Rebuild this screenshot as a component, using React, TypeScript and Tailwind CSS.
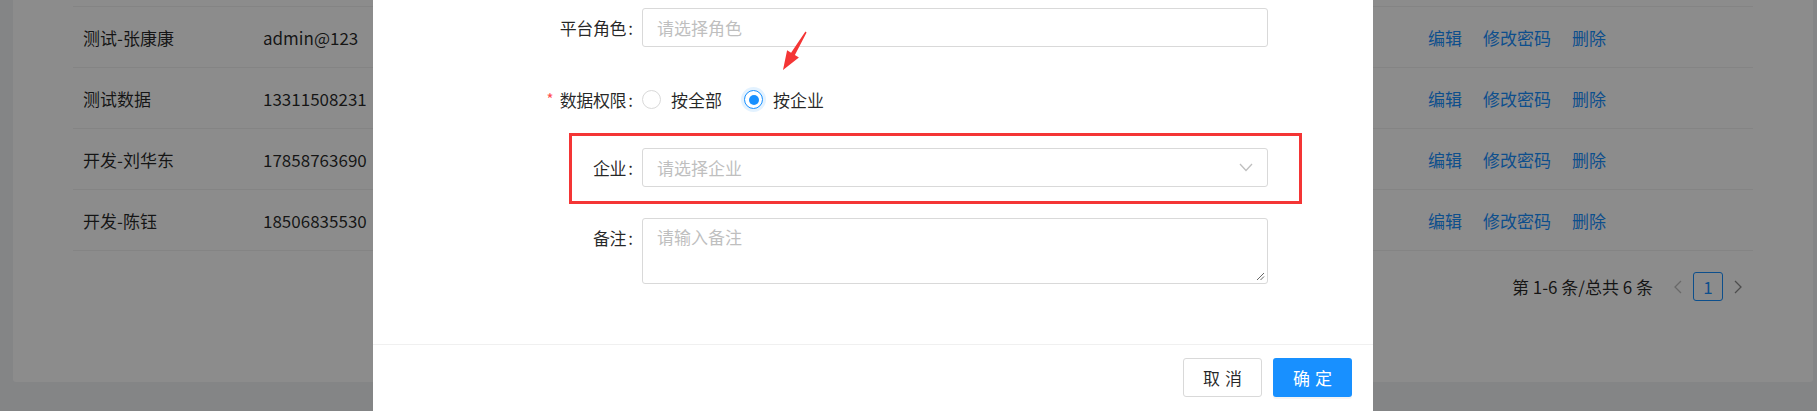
import React from "react";

const FONT = { fontFamily: '"Noto Sans CJK SC", "Noto Sans", sans-serif' };

const rows = [
  { name: "测试-张康康", phone: "admin@123" },
  { name: "测试数据", phone: "13311508231" },
  { name: "开发-刘华东", phone: "17858763690" },
  { name: "开发-陈钰", phone: "18506835530" },
];

function Radio({ checked, label }: { checked?: boolean; label: string }) {
  return (
    <div className="flex items-center">
      <div className="relative w-[19px] h-[19px] flex items-center justify-center">
        {checked ? (
          <div className="w-[19px] h-[19px] rounded-full border border-[#1890ff] bg-white flex items-center justify-center shadow-[0_0_0_3px_rgba(24,144,255,0.12)]">
            <div className="w-[10px] h-[10px] rounded-full bg-[#1890ff]" />
          </div>
        ) : (
          <div className="w-[19px] h-[19px] rounded-full border border-[#d9d9d9] bg-white" />
        )}
      </div>
      <span className="ml-[10px] text-[17px] text-[rgba(0,0,0,0.85)]">{label}</span>
    </div>
  );
}

function Label({ text, required }: { text: string; required?: boolean }) {
  return (
    <div className="w-[269px] shrink-0 pr-[9px] flex items-center justify-end text-[17px] text-[rgba(0,0,0,0.85)] h-[39px]">
      {required && <span className="text-[#ff4d4f] mr-[6px] text-[15px]">*</span>}
      <span className="tracking-[-0.02em]">{text}</span>
      <span className="ml-[2px]">:</span>
    </div>
  );
}

export default function App() {
  return (
    <div className="relative w-[1817px] h-[411px] overflow-hidden bg-[#f0f2f5]" style={FONT}>
      {/* background page */}
      <div className="pl-[13px]">
        <div className="w-[1800px] h-[382px] bg-white rounded-b-[3px] px-[60px]">
          <div className="h-[7px] border-b border-[#f0f0f0]" />
          {rows.map((r) => (
            <div
              key={r.name}
              className="h-[61px] border-b border-[#f0f0f0] flex items-center px-[10px] text-[17px] text-[rgba(0,0,0,0.85)]"
            >
              <div className="w-[180px] pt-[2px]">{r.name}</div>
              <div className="flex-1 pt-[2px]">{r.phone}</div>
              <div className="w-[315px] flex gap-[21px] text-[#1890ff] pt-[2px]">
                <span>编辑</span>
                <span>修改密码</span>
                <span>删除</span>
              </div>
            </div>
          ))}
          <div className="flex justify-end items-center mt-[21px] h-[29px] text-[17px] text-[rgba(0,0,0,0.85)]">
            <span>第 1-6 条/总共 6 条</span>
            <div className="ml-[10px] w-[30px] flex justify-center">
              <svg width="10" height="16" viewBox="0 0 10 16">
                <polyline points="8,2 2,8 8,14" fill="none" stroke="#bfbfbf" strokeWidth="1.3" />
              </svg>
            </div>
            <div className="w-[30px] h-[29px] border border-[#1890ff] rounded-[3px] flex items-center justify-center text-[#1890ff] text-[17px]">
              1
            </div>
            <div className="w-[30px] flex justify-center">
              <svg width="10" height="16" viewBox="0 0 10 16">
                <polyline points="2,2 8,8 2,14" fill="none" stroke="rgba(0,0,0,0.45)" strokeWidth="1.3" />
              </svg>
            </div>
          </div>
        </div>
      </div>

      {/* mask */}
      <div className="absolute inset-0 bg-black/45" />

      {/* modal */}
      <div className="absolute left-[373px] top-0 w-[1000px] h-[420px] bg-white">
        <div className="pt-[8px]">
          <div className="flex">
            <Label text="平台角色" />
            <div className="w-[626px] h-[39px] border border-[#d9d9d9] rounded-[3px] flex items-center pl-[14px] text-[17px] text-[#bfbfbf]">
              请选择角色
            </div>
          </div>
          <div className="flex mt-[33px]">
            <Label text="数据权限" required />
            <div className="flex items-center gap-[22px] h-[39px]">
              <Radio label="按全部" />
              <Radio label="按企业" checked />
            </div>
          </div>
          <div className="flex mt-[29px]">
            <Label text="企业" />
            <div className="w-[626px] h-[39px] border border-[#d9d9d9] rounded-[3px] flex items-center justify-between pl-[14px] pr-[14px] text-[17px] text-[#bfbfbf]">
              <span>请选择企业</span>
              <svg width="14" height="9" viewBox="0 0 14 9">
                <polyline points="1,1 7,7.5 13,1" fill="none" stroke="#bfbfbf" strokeWidth="1.3" />
              </svg>
            </div>
          </div>
          <div className="flex mt-[31px]">
            <Label text="备注" />
            <div className="relative w-[626px] h-[66px] border border-[#d9d9d9] rounded-[3px] pl-[14px] pt-[5px] text-[17px] text-[#bfbfbf]">
              请输入备注
              <svg className="absolute right-[2px] bottom-[2px]" width="9" height="9" viewBox="0 0 9 9">
                <line x1="1" y1="8" x2="8" y2="1" stroke="#666" strokeWidth="1" />
                <line x1="4.5" y1="8" x2="8" y2="4.5" stroke="#666" strokeWidth="1" />
              </svg>
            </div>
          </div>
        </div>
        <div className="mt-[60px] border-t border-[#f0f0f0] pt-[13px] pr-[21px] flex justify-end gap-[11px]">
          <button className="w-[79px] h-[39px] border border-[#d9d9d9] rounded-[3px] bg-white text-[17px] text-[rgba(0,0,0,0.85)] tracking-[0.3em] pl-[0.3em]">
            取消
          </button>
          <button className="w-[79px] h-[39px] rounded-[3px] bg-[#1890ff] text-[17px] text-white tracking-[0.3em] pl-[0.3em] shadow-[0_2px_0_rgba(0,0,0,0.045)]">
            确定
          </button>
        </div>
      </div>

      {/* annotation: red box */}
      <div className="absolute left-[569px] top-[133px] w-[733px] h-[71px] border-[3px] border-[#f43535]" />

      {/* annotation: red arrow */}
      <svg className="absolute left-0 top-0 pointer-events-none" width="1817" height="411">
        <polygon
          points="805.4,31.6 806.6,32.4 794.9,55.1 798.9,57.6 783,70 787.1,50.2 791.1,52.7"
          fill="#f43535"
        />
      </svg>
    </div>
  );
}
